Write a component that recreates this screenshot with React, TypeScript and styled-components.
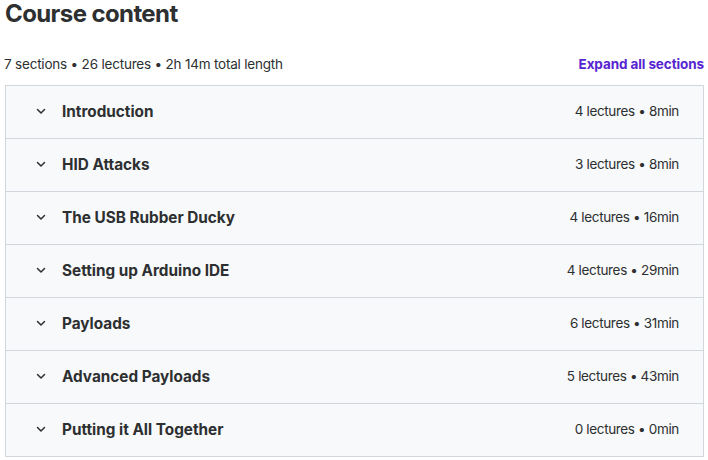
import React from 'react';
import styled, { createGlobalStyle } from 'styled-components';

interface Section {
  title: string;
  lectures: number;
  minutes: number;
}

const sections: Section[] = [
  { title: 'Introduction', lectures: 4, minutes: 8 },
  { title: 'HID Attacks', lectures: 3, minutes: 8 },
  { title: 'The USB Rubber Ducky', lectures: 4, minutes: 16 },
  { title: 'Setting up Arduino IDE', lectures: 4, minutes: 29 },
  { title: 'Payloads', lectures: 6, minutes: 31 },
  { title: 'Advanced Payloads', lectures: 5, minutes: 43 },
  { title: 'Putting it All Together', lectures: 0, minutes: 0 },
];

const GlobalStyle = createGlobalStyle`
  body {
    margin: 0;
    background: #ffffff;
    color: #2d2f31;
    font-family: Inter, 'Noto Sans', sans-serif;
  }
`;

const Chevron = () => (
  <svg width="12" height="12" viewBox="0 0 24 24" fill="none">
    <path
      d="M5 9l7 7 7-7"
      stroke="#2d2f31"
      strokeWidth="3"
      strokeLinecap="round"
      strokeLinejoin="round"
    />
  </svg>
);

export default function App() {
  return (
    <>
      <GlobalStyle />
      <Page>
        <Heading>Course content</Heading>
        <Summary>
          <Stats>7 sections • 26 lectures • 2h 14m total length</Stats>
          <ExpandLink>Expand all sections</ExpandLink>
        </Summary>
        <Panel>
          {sections.map((s) => (
            <Row key={s.title}>
              <RowLeft>
                <ChevronBox>
                  <Chevron />
                </ChevronBox>
                <SectionTitle>{s.title}</SectionTitle>
              </RowLeft>
              <Meta>
                {s.lectures} lectures • {s.minutes}min
              </Meta>
            </Row>
          ))}
        </Panel>
      </Page>
    </>
  );
}

const Page = styled.div`
  padding: 0 4px 0 5px;
`;

const Heading = styled.h2`
  margin: 0;
  font-size: 24px;
  line-height: 28px;
  font-weight: 700;
  letter-spacing: -0.6px;
  color: #2d2f31;
`;

const Summary = styled.div`
  display: flex;
  justify-content: space-between;
  align-items: center;
  margin-top: 25px;
  height: 22px;
`;

const Stats = styled.span`
  font-size: 13.5px;
  letter-spacing: -0.2px;
  color: #2d2f31;
  margin-left: -1px;
`;

const ExpandLink = styled.button`
  background: none;
  border: none;
  padding: 0;
  font-family: inherit;
  font-size: 13.5px;
  letter-spacing: -0.1px;
  font-weight: 700;
  color: #5624d0;
  cursor: pointer;
`;

const Panel = styled.div`
  margin-top: 10px;
  border: 1px solid #d1d7dc;
  border-bottom: none;
`;

const Row = styled.div`
  display: flex;
  align-items: center;
  justify-content: space-between;
  box-sizing: border-box;
  height: 53px;
  padding: 0 24px 2px 29px;
  background: #f7f9fa;
  border-bottom: 1px solid #d1d7dc;
`;

const RowLeft = styled.div`
  display: flex;
  align-items: center;
`;

const ChevronBox = styled.span`
  display: flex;
  width: 27px;
`;

const SectionTitle = styled.span`
  font-size: 15.3px;
  font-weight: 700;
  color: #2d2f31;
`;

const Meta = styled.span`
  font-size: 13.5px;
  letter-spacing: -0.35px;
  color: #2d2f31;
`;
